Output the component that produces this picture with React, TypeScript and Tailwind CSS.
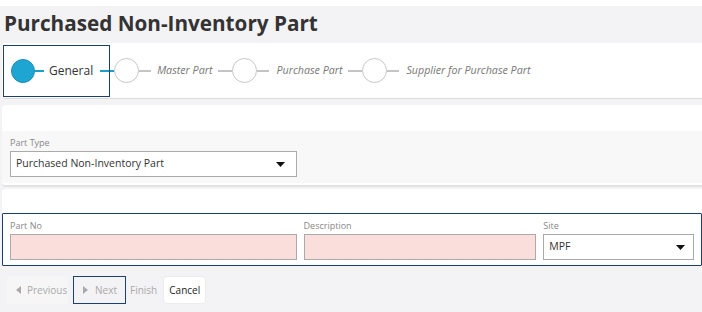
import { Fragment } from 'react';

function Caret() {
  return (
    <svg width="9" height="5" viewBox="0 0 9 5" className="shrink-0">
      <path d="M0 0 L9 0 L4.5 5 Z" fill="#111" />
    </svg>
  );
}

function Step({ label }: { label: string }) {
  return (
    <div className="flex items-center">
      <div className="w-[14px] h-[2px] bg-[#c4c4c4]" />
      <div className="w-[25px] h-[25px] rounded-full bg-white border border-[#c8c8c8]" />
      <div className="w-[12px] h-[2px] bg-[#c4c4c4]" />
      <span className="pl-[7px] pr-[6px] text-[10.7px] italic text-[#777]">{label}</span>
    </div>
  );
}

function Field({ label, pink, children, className }: { label: string; pink?: boolean; children?: React.ReactNode; className: string }) {
  return (
    <div className={`flex flex-col ${className}`}>
      <span className="text-[9px] leading-[12px] text-[#888] mb-[2px]">{label}</span>
      <div
        className={`h-[26px] border border-[#aaa] flex items-center justify-between px-[5px] text-[10.5px] text-[#333] ${
          pink ? 'bg-[#fadedb]' : 'bg-white'
        }`}
      >
        {children}
      </div>
    </div>
  );
}

export default function App() {
  const steps = ['Master Part', 'Purchase Part', 'Supplier for Purchase Part'];

  return (
    <div className="w-[702px] h-[312px] overflow-hidden bg-[#f3f2f5] font-['Open_Sans',sans-serif]">
      <div className="h-[6px] bg-white" />
      <h1 className="h-[37px] pl-[4px] text-[20.7px] leading-[34px] font-bold text-[#333]">
        Purchased Non-Inventory Part
      </h1>

      {/* Stepper */}
      <div className="ml-[2px] h-[56px] bg-white rounded-l-[3px] border-b border-[#dcdcdc] flex items-center">
        <div className="ml-[1px] h-[52px] border-[1.5px] border-[#1c3f73] flex items-center pl-[7px]">
          <div className="w-[24px] h-[24px] rounded-full bg-[#1ea5d1] border border-[#1b8fb6]" />
          <div className="w-[9px] h-[2px] bg-[#1a9fca]" />
          <span className="pl-[5px] pr-[7px] text-[12px] text-[#333]">General</span>
          <div className="w-[9px] h-[2px] bg-[#1a9fca]" />
        </div>
        <div className="w-[4px] h-[2px] bg-[#1a9fca]" />
        <div className="w-[25px] h-[25px] rounded-full bg-white border border-[#c8c8c8]" />
        <div className="w-[12px] h-[2px] bg-[#c4c4c4]" />
        <span className="pl-[6px] pr-[6px] text-[10.7px] italic text-[#777]">{steps[0]}</span>
        {steps.slice(1).map((s) => (
          <Fragment key={s}>
            <Step label={s} />
          </Fragment>
        ))}
      </div>

      {/* Part type */}
      <div className="ml-[2px] mt-[6px] h-[82px] bg-white rounded-l-[4px] border-b-[2px] border-[#e2e2e2] flex flex-col">
        <div className="h-[26px]" />
        <div className="h-[52px] bg-[#f8f8f8] px-[8px] pt-[6px]">
          <Field label="Part Type" className="w-[287px]">
            <span>Purchased Non-Inventory Part</span>
            <span className="pr-[6px]"><Caret /></span>
          </Field>
        </div>
      </div>

      {/* Part info */}
      <div className="ml-[2px] mt-[2px] bg-white rounded-l-[4px] flex flex-col">
        <div className="h-[24px]" />
        <div className="h-[53px] border-[1.5px] border-[#1c3f73] rounded-[1px] flex px-[7px] pt-[6px] gap-[7px]">
          <Field label="Part No" pink className="w-[287px]" />
          <Field label="Description" pink className="w-[233px]" />
          <Field label="Site" className="w-[151px]">
            <span>MPF</span>
            <span className="pr-[3px]"><Caret /></span>
          </Field>
        </div>
      </div>

      {/* Buttons */}
      <div className="flex items-center mt-[10px] pl-[7px] text-[10px]">
        <div className="h-[28px] w-[61px] pl-[9px] flex items-center gap-[6px] text-[#aaa] bg-[#f6f6f7] rounded-[3px]">
          <svg width="5" height="8" viewBox="0 0 5 8"><path d="M5 0 L0 4 L5 8 Z" fill="#aaa" /></svg>
          Previous
        </div>
        <div className="ml-[5px] h-[28px] w-[53px] pl-[9px] flex items-center gap-[7px] text-[#aaa] border-[1.5px] border-[#1c3f73]">
          <svg width="5" height="8" viewBox="0 0 5 8"><path d="M0 0 L5 4 L0 8 Z" fill="#aaa" /></svg>
          Next
        </div>
        <div className="ml-[4px] h-[28px] flex items-center text-[#aaa]">Finish</div>
        <div className="ml-[6px] h-[28px] w-[43px] flex items-center justify-center text-[#222] bg-white rounded-[4px] border border-[#ececec]">
          Cancel
        </div>
      </div>
    </div>
  );
}
